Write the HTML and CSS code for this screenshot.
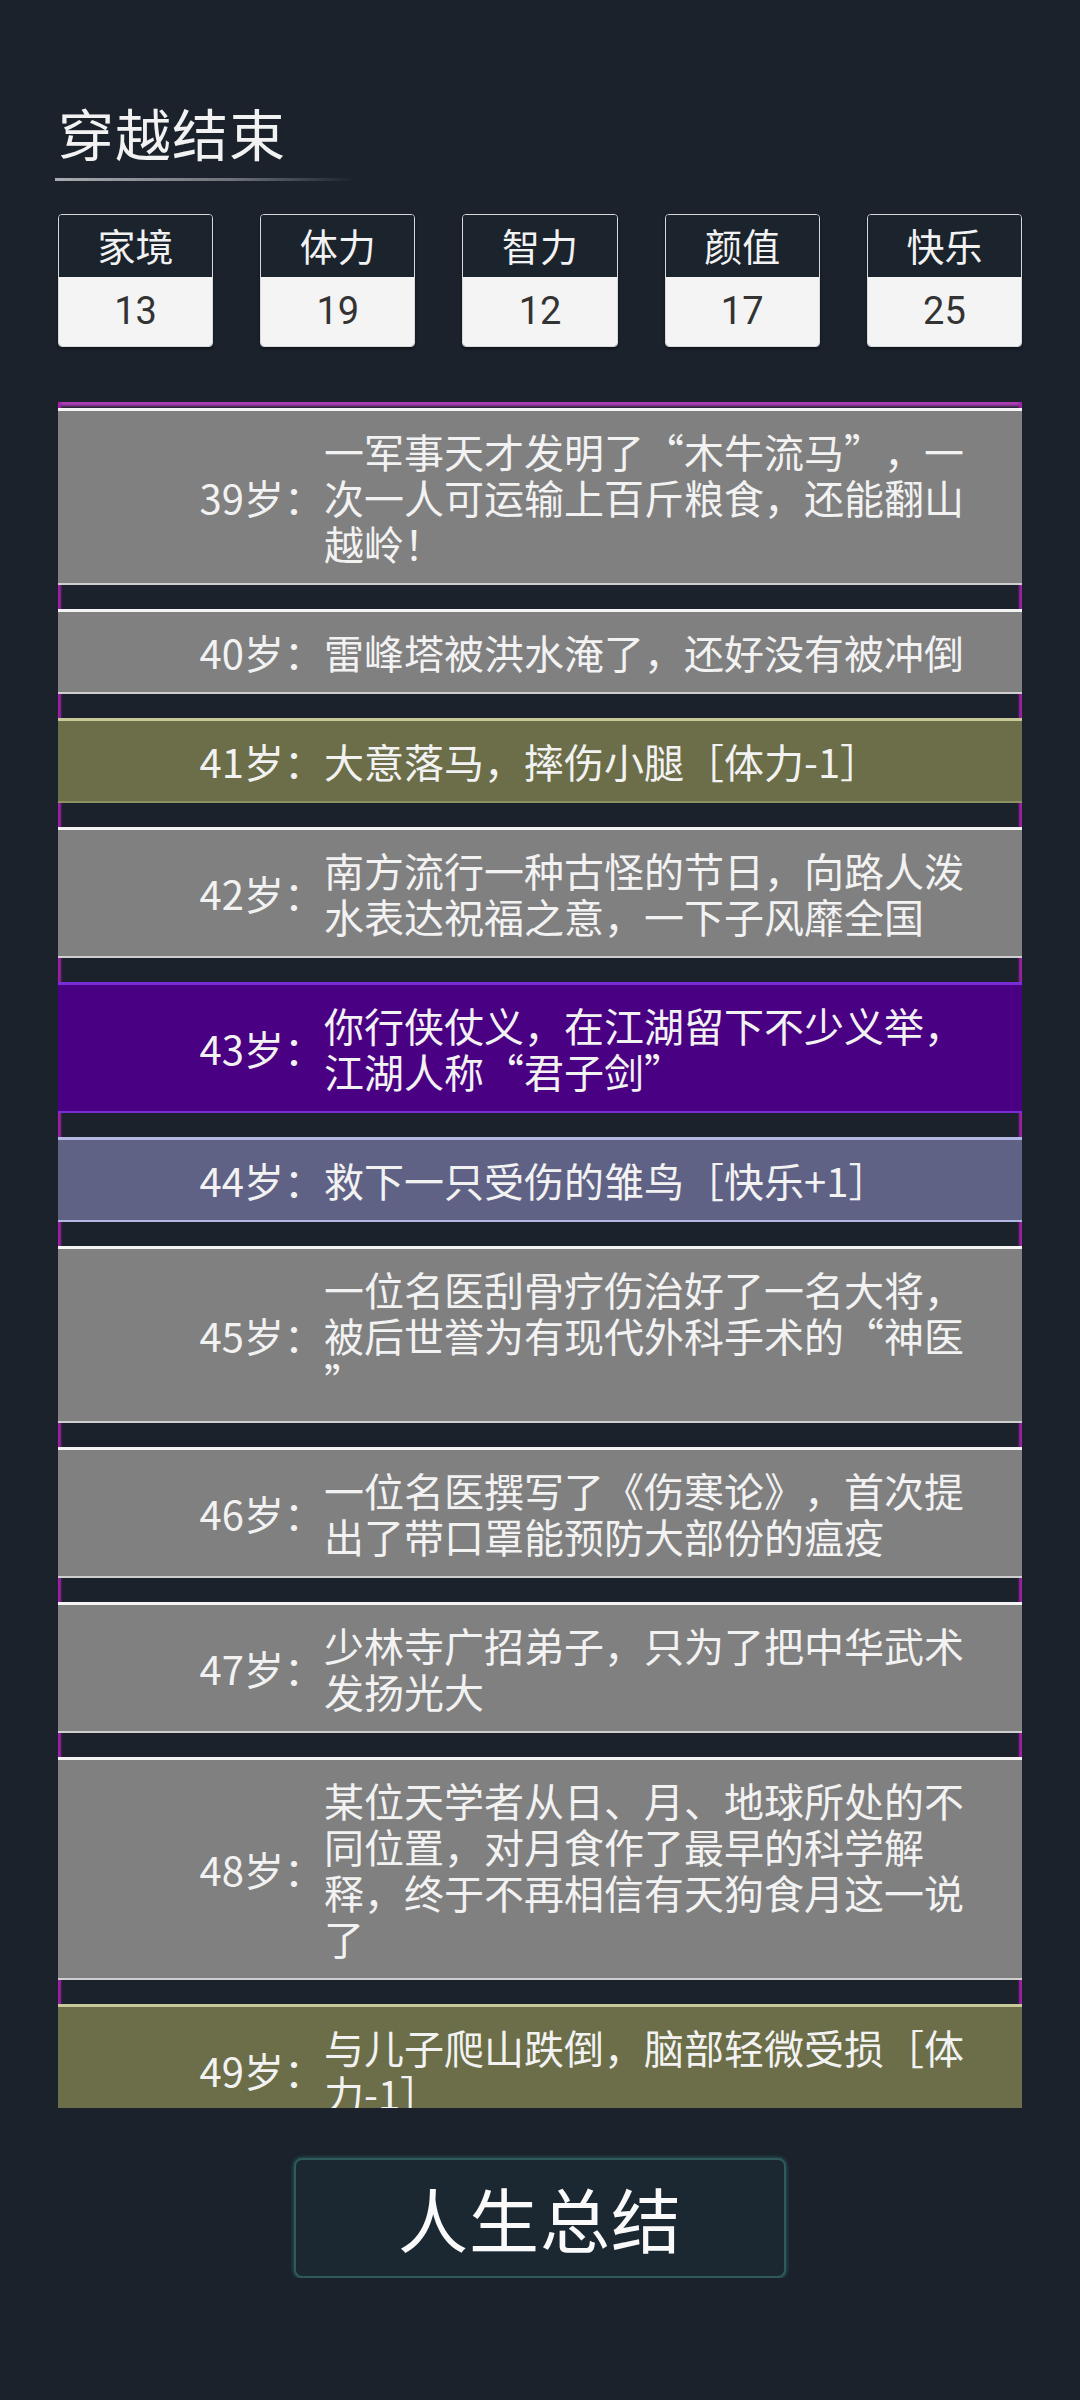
FILE: index.html
```html
<!DOCTYPE html>
<html lang="zh-CN">

<head>
    <meta charset="UTF-8">
    <meta name="viewport" content="width=device-width, initial-scale=1.0">
    <title>穿越结束</title>
    <link rel="stylesheet" href="styles.css">
</head>

<body>
    <div class="page">
        <h1 class="title">穿越结束</h1>
        <div class="title-line"></div>

        <div class="stats">
            <div class="stat">
                <div class="stat-name">家境</div>
                <div class="stat-value">13</div>
            </div>
            <div class="stat">
                <div class="stat-name">体力</div>
                <div class="stat-value">19</div>
            </div>
            <div class="stat">
                <div class="stat-name">智力</div>
                <div class="stat-value">12</div>
            </div>
            <div class="stat">
                <div class="stat-name">颜值</div>
                <div class="stat-value">17</div>
            </div>
            <div class="stat">
                <div class="stat-name">快乐</div>
                <div class="stat-value">25</div>
            </div>
        </div>

        <div class="history">
            <div class="event">
                <span class="age">39岁：</span>
                <span class="desc">一军事天才发明了“木牛流马”，一次一人可运输上百斤粮食，还能翻山越岭！</span>
            </div>
            <div class="event">
                <span class="age">40岁：</span>
                <span class="desc">雷峰塔被洪水淹了，还好没有被冲倒</span>
            </div>
            <div class="event bad">
                <span class="age">41岁：</span>
                <span class="desc">大意落马，摔伤小腿［体力-1］</span>
            </div>
            <div class="event">
                <span class="age">42岁：</span>
                <span class="desc">南方流行一种古怪的节日，向路人泼水表达祝福之意，一下子风靡全国</span>
            </div>
            <div class="event rare">
                <span class="age">43岁：</span>
                <span class="desc">你行侠仗义，在江湖留下不少义举，江湖人称“君子剑”</span>
            </div>
            <div class="event good">
                <span class="age">44岁：</span>
                <span class="desc">救下一只受伤的雏鸟［快乐+1］</span>
            </div>
            <div class="event">
                <span class="age">45岁：</span>
                <span class="desc">一位名医刮骨疗伤治好了一名大将，被后世誉为有现代外科手术的“神医<wbr>”</span>
            </div>
            <div class="event">
                <span class="age">46岁：</span>
                <span class="desc">一位名医撰写了《伤寒论》，首次提出了带口罩能预防大部份的瘟疫</span>
            </div>
            <div class="event">
                <span class="age">47岁：</span>
                <span class="desc">少林寺广招弟子，只为了把中华武术发扬光大</span>
            </div>
            <div class="event">
                <span class="age">48岁：</span>
                <span class="desc">某位天学者从日、月、地球所处的不同位置，对月食作了最早的科学解释，终于不再相信有天狗食月这一说了</span>
            </div>
            <div class="event bad">
                <span class="age">49岁：</span>
                <span class="desc">与儿子爬山跌倒，脑部轻微受损［体力-1］</span>
            </div>
        </div>

        <button class="summary">人生总结</button>
    </div>
</body>

</html>
```

FILE: styles.css
```css
body {
    margin: 0;
    background-color: #1b222c;
    font-family: "Noto Sans CJK SC", "Noto Sans", sans-serif;
    color: #f2f2f2;
}

.page {
    width: 964px;
    margin: 0 auto;
    padding-top: 96px;
}

.title {
    margin: 0;
    font-size: 56px;
    font-weight: 400;
    line-height: 72px;
    letter-spacing: 1px;
}

.title-line {
    width: 300px;
    height: 3px;
    margin-top: 10px;
    margin-left: -3px;
    background: linear-gradient(to right, #a8adb2 0%, #6b7177 60%, rgba(27, 34, 44, 0) 100%);
}

.stats {
    display: flex;
    gap: 47px;
    margin-top: 33px;
}

.stat {
    width: 155px;
    border: 1px solid #d7dadd;
    border-radius: 4px;
    overflow: hidden;
    box-shadow: 0 2px 3px rgba(0, 0, 0, 0.4);
}

.stat-name {
    height: 62px;
    line-height: 60px;
    text-align: center;
    font-size: 38px;
    background-color: #1b232d;
}

.stat-value {
    height: 69px;
    line-height: 69px;
    text-align: center;
    font-family: Roboto, "Liberation Sans", sans-serif;
    font-size: 38px;
    color: #333;
    background-color: #f4f4f4;
}

.history {
    display: flex;
    flex-direction: column;
    gap: 24px;
    height: 1700px;
    margin-top: 55px;
    padding-top: 6px;
    overflow: hidden;
    box-shadow: inset 4px 0 2px -1px #a020a8, inset -4px 0 2px -1px #a020a8, inset 0 5px 3px -1px #b040b8;
}

.event {
    display: flex;
    align-items: center;
    flex-shrink: 0;
    padding: 17px 0 17px;
    border-top: 3px solid #f4f4f4;
    border-bottom: 2px solid #cfcfcf;
    background-color: #808080;
    font-size: 40px;
    line-height: 46px;
    text-spacing-trim: space-all;
}

.event.bad {
    background-color: #6b6e48;
    border-top-color: #c7ca98;
    border-bottom-color: #8e9163;
}

.event.rare {
    background-color: #4a0082;
    border-top-color: #7a2cd6;
    border-bottom-color: #7a2cd6;
}

.event.good {
    background-color: #5f6285;
    border-top-color: #b4b8e4;
    border-bottom-color: #b4b8e4;
}

.age {
    width: 266px;
    flex-shrink: 0;
    text-align: right;
}

.desc {
    width: 666px;
}

.summary {
    display: block;
    width: 492px;
    height: 120px;
    margin: 50px auto 0;
    padding: 0;
    border: 2px solid #2f5a5c;
    border-radius: 8px;
    box-shadow: 0 0 4px #2b6868;
    background-color: #1b2832;
    color: #fafafa;
    font-family: "Noto Sans CJK SC", sans-serif;
    font-size: 70px;
    line-height: 80px;
    letter-spacing: 1px;
}
```
